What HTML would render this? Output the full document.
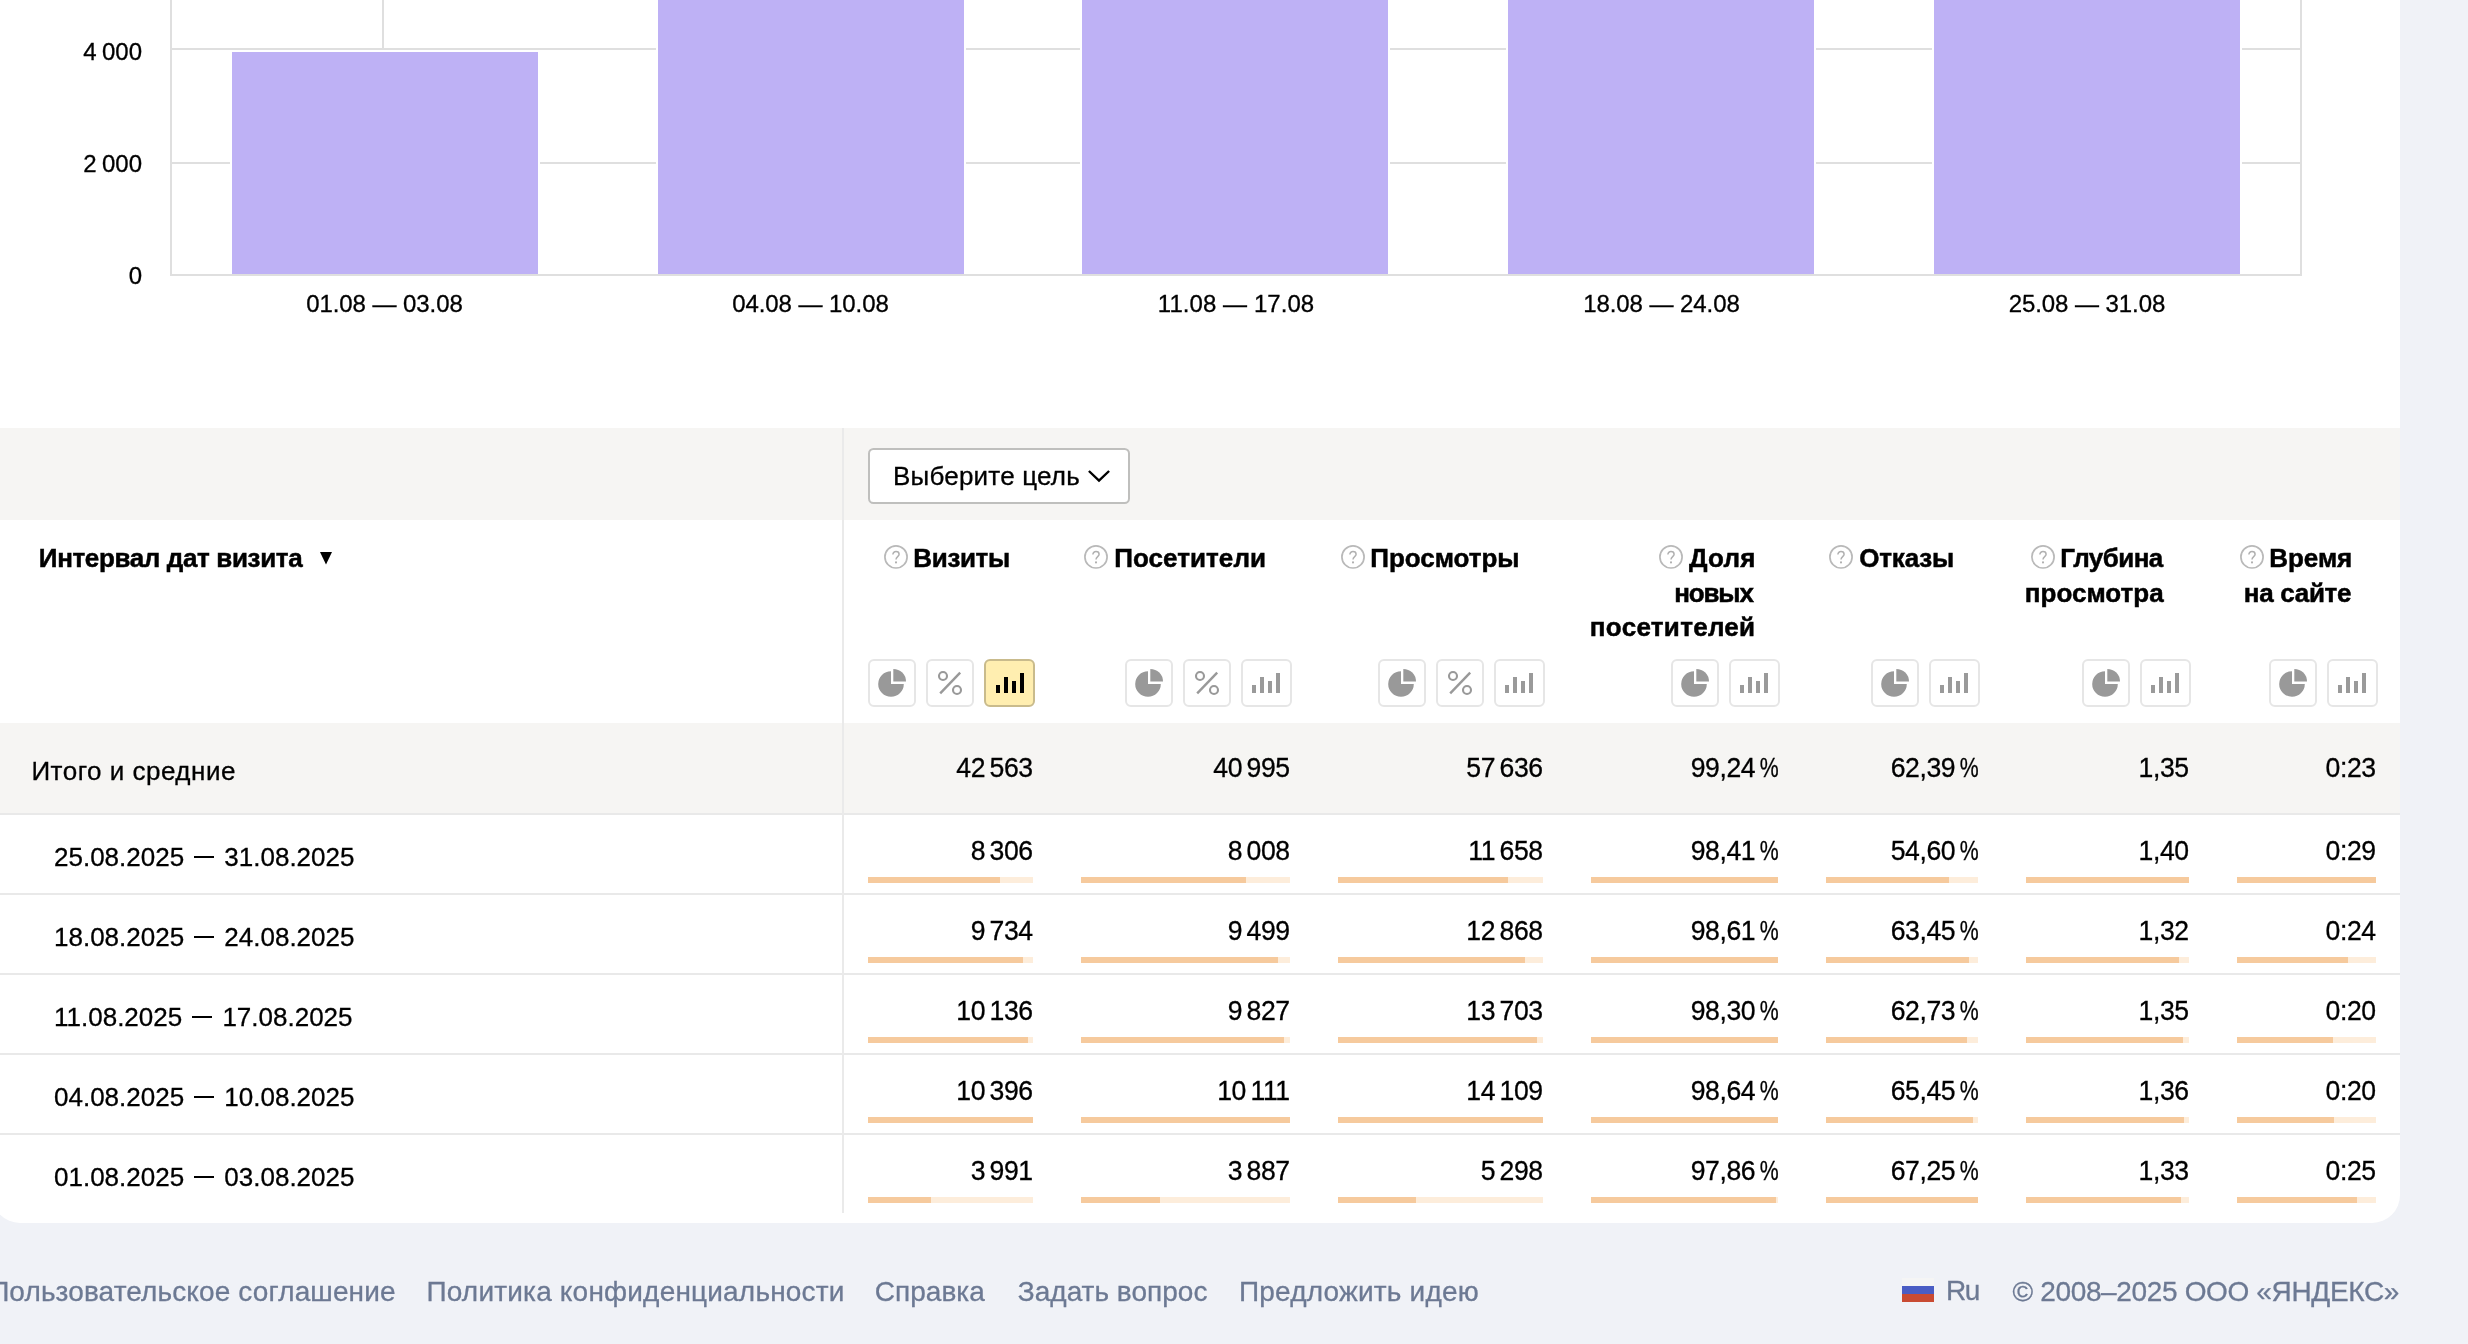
<!DOCTYPE html>
<html lang="ru"><head><meta charset="utf-8"><title>Метрика</title><style>
html,body{margin:0;padding:0;}
body{width:2468px;height:1344px;overflow:hidden;background:#f0f2f7;position:relative;font-family:"Liberation Sans", sans-serif;color:#000;-webkit-text-stroke:0.3px currentColor;}
#r{position:absolute;left:0;top:0;width:2468px;height:1344px;overflow:hidden;will-change:transform;-webkit-font-smoothing:antialiased;}
#r>div,#r>span,#r>svg{position:absolute;display:block;white-space:pre;box-sizing:content-box;}
i{font-style:normal;}
.num{font-size:26.6px;line-height:27px;text-align:right;letter-spacing:-0.4px;transform:scaleY(1.035);transform-origin:50% 22.5px;}
.ts{display:inline-block;width:4.5px;}
.ts2{display:inline-block;width:5.3px;}
.pc{display:inline-block;transform:scaleX(.8);transform-origin:100% 50%;margin-left:-0.2px;}
.dash{display:inline-block;width:20px;height:2px;background:#000;margin:0 10.2px 0 10px;vertical-align:7.5px;}
</style></head><body><div id="r">
<div style="left:-8px;top:-60px;width:2408px;height:1283px;background:#fff;border-radius:0 0 28px 28px;"></div>
<div style="left:382px;top:0px;width:2px;height:50px;background:#dfdfdf;"></div>
<div style="left:171px;top:48px;width:2130px;height:2px;background:#dfdfdf;"></div>
<div style="left:171px;top:162px;width:2130px;height:2px;background:#dfdfdf;"></div>
<div style="left:230px;top:50px;width:310px;height:224px;background:#fff;"></div>
<div style="left:232px;top:52px;width:306px;height:222px;background:#beb1f5;"></div>
<div style="left:656px;top:-12px;width:310px;height:286px;background:#fff;"></div>
<div style="left:658px;top:-10px;width:306px;height:284px;background:#beb1f5;"></div>
<div style="left:1080px;top:-12px;width:310px;height:286px;background:#fff;"></div>
<div style="left:1082px;top:-10px;width:306px;height:284px;background:#beb1f5;"></div>
<div style="left:1506px;top:-12px;width:310px;height:286px;background:#fff;"></div>
<div style="left:1508px;top:-10px;width:306px;height:284px;background:#beb1f5;"></div>
<div style="left:1932px;top:-12px;width:310px;height:286px;background:#fff;"></div>
<div style="left:1934px;top:-10px;width:306px;height:284px;background:#beb1f5;"></div>
<div style="left:170px;top:0px;width:2px;height:276px;background:#dfdfdf;"></div>
<div style="left:2300px;top:0px;width:2px;height:276px;background:#dfdfdf;"></div>
<div style="left:170px;top:274px;width:2132px;height:2px;background:#dfdfdf;"></div>
<span style="right:2326px;top:39.68px;font-size:24px;line-height:24px;">4<i class="ts2"></i>000</span>
<span style="right:2326px;top:151.68px;font-size:24px;line-height:24px;">2<i class="ts2"></i>000</span>
<span style="right:2326px;top:263.68px;font-size:24px;line-height:24px;">0</span>
<span style="left:306.21px;top:291.68px;font-size:24px;line-height:24px;color:#000;letter-spacing:-0.073px;">01.08 — 03.08</span>
<span style="left:732.21px;top:291.68px;font-size:24px;line-height:24px;color:#000;letter-spacing:-0.073px;">04.08 — 10.08</span>
<span style="left:1157.78px;top:291.68px;font-size:24px;line-height:24px;color:#000;letter-spacing:0.064px;">11.08 — 17.08</span>
<span style="left:1583.21px;top:291.68px;font-size:24px;line-height:24px;color:#000;letter-spacing:-0.073px;">18.08 — 24.08</span>
<span style="left:2008.71px;top:291.68px;font-size:24px;line-height:24px;color:#000;letter-spacing:-0.073px;">25.08 — 31.08</span>
<div style="left:0px;top:428px;width:2400px;height:92px;background:#f6f5f3;"></div>
<div style="left:0px;top:723px;width:2400px;height:90px;background:#f6f5f3;"></div>
<div style="left:0px;top:813px;width:2400px;height:2px;background:#e9e9e9;"></div>
<div style="left:0px;top:893px;width:2400px;height:2px;background:#e9e9e9;"></div>
<div style="left:0px;top:973px;width:2400px;height:2px;background:#e9e9e9;"></div>
<div style="left:0px;top:1053px;width:2400px;height:2px;background:#e9e9e9;"></div>
<div style="left:0px;top:1133px;width:2400px;height:2px;background:#e9e9e9;"></div>
<div style="left:842px;top:428px;width:2px;height:785px;background:#eaeaea;"></div>
<div style="left:868px;top:448px;width:258px;height:52px;background:#fff;border:2px solid #bfbfbd;border-radius:5.5px;"></div>
<span style="left:892.98px;top:462.99px;font-size:26px;line-height:26px;color:#000;letter-spacing:0.212px;">Выберите цель</span>
<svg style="left:1086px;top:468px" width="26" height="16" viewBox="0 0 26 16"><path d="M2.9 3.0 L13 12.7 L23.1 3.0" fill="none" stroke="#000" stroke-width="2.4" stroke-linecap="butt" stroke-linejoin="miter"/></svg>
<span style="left:38.82px;top:544.99px;font-size:26px;line-height:26px;color:#000;font-weight:700;-webkit-text-stroke-width:0.5px;letter-spacing:-0.361px;">Интервал дат визита</span>
<svg style="left:320px;top:552px" width="12" height="13" viewBox="0 0 12 13"><path d="M0 0 H12 L6 12.5 Z" fill="#000"/></svg>
<span style="left:913.36px;top:544.99px;font-size:26px;line-height:26px;color:#000;font-weight:700;-webkit-text-stroke-width:0.5px;letter-spacing:-0.370px;">Визиты</span>
<svg style="left:882.8px;top:544px" width="26" height="26" viewBox="0 0 26 26"><circle cx="13" cy="12.9" r="11.1" fill="#fff" stroke="#b9b9b9" stroke-width="1.7"/><path d="M9.9 10.6 C9.9 8.6 11.3 7.6 13 7.6 C14.8 7.6 16.1 8.7 16.1 10.3 C16.1 12.6 13 12.6 13 15.4" fill="none" stroke="#b0b0b0" stroke-width="1.5"/><circle cx="13" cy="18.4" r="1.05" fill="#b0b0b0"/></svg>
<div style="left:984px;top:659px;width:47px;height:44px;background:#ffeeb0;border:2px solid #c9bb8c;border-radius:6px;"></div>
<svg style="left:984px;top:659px" width="50" height="48" viewBox="0 0 50 48"><path d="M12 26h4v8h-4z M20 18h4v16h-4z M28 22h4v12h-4z M36 14h4v20h-4z" fill="#000"/></svg>
<div style="left:926px;top:659px;width:44px;height:44px;background:#fff;border:2px solid #e6e6e6;border-radius:6px;"></div>
<svg style="left:926px;top:659px" width="48" height="48" viewBox="0 0 48 48"><circle cx="17" cy="17" r="4" fill="none" stroke="#999" stroke-width="2.1"/><circle cx="31" cy="31" r="4" fill="none" stroke="#999" stroke-width="2.1"/><path d="M14.2 34.4 L34.2 13.6" stroke="#999" stroke-width="2.4" fill="none"/></svg>
<div style="left:868px;top:659px;width:44px;height:44px;background:#fff;border:2px solid #e6e6e6;border-radius:6px;"></div>
<svg style="left:868px;top:659px" width="48" height="48" viewBox="0 0 48 48"><path d="M23 12.2 A12.8 12.8 0 1 0 35.8 25 H23 Z" fill="#999"/><path d="M25.3 9.9 A12.7 12.7 0 0 1 38 22.6 H25.3 Z" fill="#999"/></svg>
<span style="left:1114.24px;top:544.99px;font-size:26px;line-height:26px;color:#000;font-weight:700;-webkit-text-stroke-width:0.5px;letter-spacing:0.054px;">Посетители</span>
<svg style="left:1082.8px;top:544px" width="26" height="26" viewBox="0 0 26 26"><circle cx="13" cy="12.9" r="11.1" fill="#fff" stroke="#b9b9b9" stroke-width="1.7"/><path d="M9.9 10.6 C9.9 8.6 11.3 7.6 13 7.6 C14.8 7.6 16.1 8.7 16.1 10.3 C16.1 12.6 13 12.6 13 15.4" fill="none" stroke="#b0b0b0" stroke-width="1.5"/><circle cx="13" cy="18.4" r="1.05" fill="#b0b0b0"/></svg>
<div style="left:1241px;top:659px;width:47px;height:44px;background:#fff;border:2px solid #e6e6e6;border-radius:6px;"></div>
<svg style="left:1240px;top:659px" width="50" height="48" viewBox="0 0 50 48"><path d="M12 26h4v8h-4z M20 18h4v16h-4z M28 22h4v12h-4z M36 14h4v20h-4z" fill="#9a9a9a"/></svg>
<div style="left:1183px;top:659px;width:44px;height:44px;background:#fff;border:2px solid #e6e6e6;border-radius:6px;"></div>
<svg style="left:1183px;top:659px" width="48" height="48" viewBox="0 0 48 48"><circle cx="17" cy="17" r="4" fill="none" stroke="#999" stroke-width="2.1"/><circle cx="31" cy="31" r="4" fill="none" stroke="#999" stroke-width="2.1"/><path d="M14.2 34.4 L34.2 13.6" stroke="#999" stroke-width="2.4" fill="none"/></svg>
<div style="left:1125px;top:659px;width:44px;height:44px;background:#fff;border:2px solid #e6e6e6;border-radius:6px;"></div>
<svg style="left:1125px;top:659px" width="48" height="48" viewBox="0 0 48 48"><path d="M23 12.2 A12.8 12.8 0 1 0 35.8 25 H23 Z" fill="#999"/><path d="M25.3 9.9 A12.7 12.7 0 0 1 38 22.6 H25.3 Z" fill="#999"/></svg>
<span style="left:1370.36px;top:544.99px;font-size:26px;line-height:26px;color:#000;font-weight:700;-webkit-text-stroke-width:0.5px;letter-spacing:-0.040px;">Просмотры</span>
<svg style="left:1339.8px;top:544px" width="26" height="26" viewBox="0 0 26 26"><circle cx="13" cy="12.9" r="11.1" fill="#fff" stroke="#b9b9b9" stroke-width="1.7"/><path d="M9.9 10.6 C9.9 8.6 11.3 7.6 13 7.6 C14.8 7.6 16.1 8.7 16.1 10.3 C16.1 12.6 13 12.6 13 15.4" fill="none" stroke="#b0b0b0" stroke-width="1.5"/><circle cx="13" cy="18.4" r="1.05" fill="#b0b0b0"/></svg>
<div style="left:1494px;top:659px;width:47px;height:44px;background:#fff;border:2px solid #e6e6e6;border-radius:6px;"></div>
<svg style="left:1493px;top:659px" width="50" height="48" viewBox="0 0 50 48"><path d="M12 26h4v8h-4z M20 18h4v16h-4z M28 22h4v12h-4z M36 14h4v20h-4z" fill="#9a9a9a"/></svg>
<div style="left:1436px;top:659px;width:44px;height:44px;background:#fff;border:2px solid #e6e6e6;border-radius:6px;"></div>
<svg style="left:1436px;top:659px" width="48" height="48" viewBox="0 0 48 48"><circle cx="17" cy="17" r="4" fill="none" stroke="#999" stroke-width="2.1"/><circle cx="31" cy="31" r="4" fill="none" stroke="#999" stroke-width="2.1"/><path d="M14.2 34.4 L34.2 13.6" stroke="#999" stroke-width="2.4" fill="none"/></svg>
<div style="left:1378px;top:659px;width:44px;height:44px;background:#fff;border:2px solid #e6e6e6;border-radius:6px;"></div>
<svg style="left:1378px;top:659px" width="48" height="48" viewBox="0 0 48 48"><path d="M23 12.2 A12.8 12.8 0 1 0 35.8 25 H23 Z" fill="#999"/><path d="M25.3 9.9 A12.7 12.7 0 0 1 38 22.6 H25.3 Z" fill="#999"/></svg>
<span style="left:1689.00px;top:544.99px;font-size:26px;line-height:26px;color:#000;font-weight:700;-webkit-text-stroke-width:0.5px;letter-spacing:0.217px;">Доля</span>
<span style="left:1674.24px;top:579.99px;font-size:26px;line-height:26px;color:#000;font-weight:700;-webkit-text-stroke-width:0.5px;letter-spacing:-1.147px;">новых</span>
<span style="left:1589.86px;top:613.99px;font-size:26px;line-height:26px;color:#000;font-weight:700;-webkit-text-stroke-width:0.5px;letter-spacing:0.290px;">посетителей</span>
<svg style="left:1657.9px;top:544px" width="26" height="26" viewBox="0 0 26 26"><circle cx="13" cy="12.9" r="11.1" fill="#fff" stroke="#b9b9b9" stroke-width="1.7"/><path d="M9.9 10.6 C9.9 8.6 11.3 7.6 13 7.6 C14.8 7.6 16.1 8.7 16.1 10.3 C16.1 12.6 13 12.6 13 15.4" fill="none" stroke="#b0b0b0" stroke-width="1.5"/><circle cx="13" cy="18.4" r="1.05" fill="#b0b0b0"/></svg>
<div style="left:1729px;top:659px;width:47px;height:44px;background:#fff;border:2px solid #e6e6e6;border-radius:6px;"></div>
<svg style="left:1728px;top:659px" width="50" height="48" viewBox="0 0 50 48"><path d="M12 26h4v8h-4z M20 18h4v16h-4z M28 22h4v12h-4z M36 14h4v20h-4z" fill="#9a9a9a"/></svg>
<div style="left:1671px;top:659px;width:44px;height:44px;background:#fff;border:2px solid #e6e6e6;border-radius:6px;"></div>
<svg style="left:1671px;top:659px" width="48" height="48" viewBox="0 0 48 48"><path d="M23 12.2 A12.8 12.8 0 1 0 35.8 25 H23 Z" fill="#999"/><path d="M25.3 9.9 A12.7 12.7 0 0 1 38 22.6 H25.3 Z" fill="#999"/></svg>
<span style="left:1859.16px;top:544.99px;font-size:26px;line-height:26px;color:#000;font-weight:700;-webkit-text-stroke-width:0.5px;letter-spacing:-0.159px;">Отказы</span>
<svg style="left:1828.0px;top:544px" width="26" height="26" viewBox="0 0 26 26"><circle cx="13" cy="12.9" r="11.1" fill="#fff" stroke="#b9b9b9" stroke-width="1.7"/><path d="M9.9 10.6 C9.9 8.6 11.3 7.6 13 7.6 C14.8 7.6 16.1 8.7 16.1 10.3 C16.1 12.6 13 12.6 13 15.4" fill="none" stroke="#b0b0b0" stroke-width="1.5"/><circle cx="13" cy="18.4" r="1.05" fill="#b0b0b0"/></svg>
<div style="left:1929px;top:659px;width:47px;height:44px;background:#fff;border:2px solid #e6e6e6;border-radius:6px;"></div>
<svg style="left:1928px;top:659px" width="50" height="48" viewBox="0 0 50 48"><path d="M12 26h4v8h-4z M20 18h4v16h-4z M28 22h4v12h-4z M36 14h4v20h-4z" fill="#9a9a9a"/></svg>
<div style="left:1871px;top:659px;width:44px;height:44px;background:#fff;border:2px solid #e6e6e6;border-radius:6px;"></div>
<svg style="left:1871px;top:659px" width="48" height="48" viewBox="0 0 48 48"><path d="M23 12.2 A12.8 12.8 0 1 0 35.8 25 H23 Z" fill="#999"/><path d="M25.3 9.9 A12.7 12.7 0 0 1 38 22.6 H25.3 Z" fill="#999"/></svg>
<span style="left:2060.32px;top:544.99px;font-size:26px;line-height:26px;color:#000;font-weight:700;-webkit-text-stroke-width:0.5px;letter-spacing:-0.544px;">Глубина</span>
<span style="left:2024.86px;top:579.99px;font-size:26px;line-height:26px;color:#000;font-weight:700;-webkit-text-stroke-width:0.5px;letter-spacing:0.007px;">просмотра</span>
<svg style="left:2029.7px;top:544px" width="26" height="26" viewBox="0 0 26 26"><circle cx="13" cy="12.9" r="11.1" fill="#fff" stroke="#b9b9b9" stroke-width="1.7"/><path d="M9.9 10.6 C9.9 8.6 11.3 7.6 13 7.6 C14.8 7.6 16.1 8.7 16.1 10.3 C16.1 12.6 13 12.6 13 15.4" fill="none" stroke="#b0b0b0" stroke-width="1.5"/><circle cx="13" cy="18.4" r="1.05" fill="#b0b0b0"/></svg>
<div style="left:2140px;top:659px;width:47px;height:44px;background:#fff;border:2px solid #e6e6e6;border-radius:6px;"></div>
<svg style="left:2139px;top:659px" width="50" height="48" viewBox="0 0 50 48"><path d="M12 26h4v8h-4z M20 18h4v16h-4z M28 22h4v12h-4z M36 14h4v20h-4z" fill="#9a9a9a"/></svg>
<div style="left:2082px;top:659px;width:44px;height:44px;background:#fff;border:2px solid #e6e6e6;border-radius:6px;"></div>
<svg style="left:2082px;top:659px" width="48" height="48" viewBox="0 0 48 48"><path d="M23 12.2 A12.8 12.8 0 1 0 35.8 25 H23 Z" fill="#999"/><path d="M25.3 9.9 A12.7 12.7 0 0 1 38 22.6 H25.3 Z" fill="#999"/></svg>
<span style="left:2269.24px;top:544.99px;font-size:26px;line-height:26px;color:#000;font-weight:700;-webkit-text-stroke-width:0.5px;letter-spacing:-0.037px;">Время</span>
<span style="left:2243.86px;top:579.99px;font-size:26px;line-height:26px;color:#000;font-weight:700;-webkit-text-stroke-width:0.5px;letter-spacing:-0.308px;">на сайте</span>
<svg style="left:2238.9px;top:544px" width="26" height="26" viewBox="0 0 26 26"><circle cx="13" cy="12.9" r="11.1" fill="#fff" stroke="#b9b9b9" stroke-width="1.7"/><path d="M9.9 10.6 C9.9 8.6 11.3 7.6 13 7.6 C14.8 7.6 16.1 8.7 16.1 10.3 C16.1 12.6 13 12.6 13 15.4" fill="none" stroke="#b0b0b0" stroke-width="1.5"/><circle cx="13" cy="18.4" r="1.05" fill="#b0b0b0"/></svg>
<div style="left:2327px;top:659px;width:47px;height:44px;background:#fff;border:2px solid #e6e6e6;border-radius:6px;"></div>
<svg style="left:2326px;top:659px" width="50" height="48" viewBox="0 0 50 48"><path d="M12 26h4v8h-4z M20 18h4v16h-4z M28 22h4v12h-4z M36 14h4v20h-4z" fill="#9a9a9a"/></svg>
<div style="left:2269px;top:659px;width:44px;height:44px;background:#fff;border:2px solid #e6e6e6;border-radius:6px;"></div>
<svg style="left:2269px;top:659px" width="48" height="48" viewBox="0 0 48 48"><path d="M23 12.2 A12.8 12.8 0 1 0 35.8 25 H23 Z" fill="#999"/><path d="M25.3 9.9 A12.7 12.7 0 0 1 38 22.6 H25.3 Z" fill="#999"/></svg>
<span style="left:31.40px;top:757.99px;font-size:26px;line-height:26px;color:#000;letter-spacing:0.501px;">Итого и средние</span>
<span class="num" style="right:1435.3px;top:754.64px;">42<i class="ts"></i>563</span>
<span class="num" style="right:1178.3px;top:754.64px;">40<i class="ts"></i>995</span>
<span class="num" style="right:925.3px;top:754.64px;">57<i class="ts"></i>636</span>
<span class="num" style="right:689.7px;top:754.64px;">99,24<i class="pc">%</i></span>
<span class="num" style="right:489.7px;top:754.64px;">62,39<i class="pc">%</i></span>
<span class="num" style="right:279.3px;top:754.64px;">1,35</span>
<span class="num" style="right:92.3px;top:754.64px;">0:23</span>
<span style="left:54px;top:843.99px;font-size:26px;line-height:26px;">25.08.2025<i class="dash"></i>31.08.2025</span>
<span class="num" style="right:1435.3px;top:837.64px;">8<i class="ts"></i>306</span>
<div style="left:868px;top:877px;width:165px;height:6px;background:#fdeddb;"></div>
<div style="left:868px;top:877px;width:132.0px;height:6px;background:#f6ca9d;"></div>
<span class="num" style="right:1178.3px;top:837.64px;">8<i class="ts"></i>008</span>
<div style="left:1081px;top:877px;width:209px;height:6px;background:#fdeddb;"></div>
<div style="left:1081px;top:877px;width:165.1px;height:6px;background:#f6ca9d;"></div>
<span class="num" style="right:925.3px;top:837.64px;">11<i class="ts"></i>658</span>
<div style="left:1338px;top:877px;width:205px;height:6px;background:#fdeddb;"></div>
<div style="left:1338px;top:877px;width:170.2px;height:6px;background:#f6ca9d;"></div>
<span class="num" style="right:689.7px;top:837.64px;">98,41<i class="pc">%</i></span>
<div style="left:1591px;top:877px;width:187px;height:6px;background:#fdeddb;"></div>
<div style="left:1591px;top:877px;width:187.0px;height:6px;background:#f6ca9d;"></div>
<span class="num" style="right:489.7px;top:837.64px;">54,60<i class="pc">%</i></span>
<div style="left:1826px;top:877px;width:152px;height:6px;background:#fdeddb;"></div>
<div style="left:1826px;top:877px;width:123.1px;height:6px;background:#f6ca9d;"></div>
<span class="num" style="right:279.3px;top:837.64px;">1,40</span>
<div style="left:2026px;top:877px;width:163px;height:6px;background:#fdeddb;"></div>
<div style="left:2026px;top:877px;width:163.0px;height:6px;background:#f6ca9d;"></div>
<span class="num" style="right:92.3px;top:837.64px;">0:29</span>
<div style="left:2237px;top:877px;width:139px;height:6px;background:#fdeddb;"></div>
<div style="left:2237px;top:877px;width:139.0px;height:6px;background:#f6ca9d;"></div>
<span style="left:54px;top:923.99px;font-size:26px;line-height:26px;">18.08.2025<i class="dash"></i>24.08.2025</span>
<span class="num" style="right:1435.3px;top:917.64px;">9<i class="ts"></i>734</span>
<div style="left:868px;top:957px;width:165px;height:6px;background:#fdeddb;"></div>
<div style="left:868px;top:957px;width:155.1px;height:6px;background:#f6ca9d;"></div>
<span class="num" style="right:1178.3px;top:917.64px;">9<i class="ts"></i>499</span>
<div style="left:1081px;top:957px;width:209px;height:6px;background:#fdeddb;"></div>
<div style="left:1081px;top:957px;width:196.5px;height:6px;background:#f6ca9d;"></div>
<span class="num" style="right:925.3px;top:917.64px;">12<i class="ts"></i>868</span>
<div style="left:1338px;top:957px;width:205px;height:6px;background:#fdeddb;"></div>
<div style="left:1338px;top:957px;width:186.6px;height:6px;background:#f6ca9d;"></div>
<span class="num" style="right:689.7px;top:917.64px;">98,61<i class="pc">%</i></span>
<div style="left:1591px;top:957px;width:187px;height:6px;background:#fdeddb;"></div>
<div style="left:1591px;top:957px;width:187.0px;height:6px;background:#f6ca9d;"></div>
<span class="num" style="right:489.7px;top:917.64px;">63,45<i class="pc">%</i></span>
<div style="left:1826px;top:957px;width:152px;height:6px;background:#fdeddb;"></div>
<div style="left:1826px;top:957px;width:142.9px;height:6px;background:#f6ca9d;"></div>
<span class="num" style="right:279.3px;top:917.64px;">1,32</span>
<div style="left:2026px;top:957px;width:163px;height:6px;background:#fdeddb;"></div>
<div style="left:2026px;top:957px;width:153.2px;height:6px;background:#f6ca9d;"></div>
<span class="num" style="right:92.3px;top:917.64px;">0:24</span>
<div style="left:2237px;top:957px;width:139px;height:6px;background:#fdeddb;"></div>
<div style="left:2237px;top:957px;width:111.2px;height:6px;background:#f6ca9d;"></div>
<span style="left:54px;top:1003.99px;font-size:26px;line-height:26px;">11.08.2025<i class="dash"></i>17.08.2025</span>
<span class="num" style="right:1435.3px;top:997.64px;">10<i class="ts"></i>136</span>
<div style="left:868px;top:1037px;width:165px;height:6px;background:#fdeddb;"></div>
<div style="left:868px;top:1037px;width:160.1px;height:6px;background:#f6ca9d;"></div>
<span class="num" style="right:1178.3px;top:997.64px;">9<i class="ts"></i>827</span>
<div style="left:1081px;top:1037px;width:209px;height:6px;background:#fdeddb;"></div>
<div style="left:1081px;top:1037px;width:202.7px;height:6px;background:#f6ca9d;"></div>
<span class="num" style="right:925.3px;top:997.64px;">13<i class="ts"></i>703</span>
<div style="left:1338px;top:1037px;width:205px;height:6px;background:#fdeddb;"></div>
<div style="left:1338px;top:1037px;width:198.8px;height:6px;background:#f6ca9d;"></div>
<span class="num" style="right:689.7px;top:997.64px;">98,30<i class="pc">%</i></span>
<div style="left:1591px;top:1037px;width:187px;height:6px;background:#fdeddb;"></div>
<div style="left:1591px;top:1037px;width:187.0px;height:6px;background:#f6ca9d;"></div>
<span class="num" style="right:489.7px;top:997.64px;">62,73<i class="pc">%</i></span>
<div style="left:1826px;top:1037px;width:152px;height:6px;background:#fdeddb;"></div>
<div style="left:1826px;top:1037px;width:141.4px;height:6px;background:#f6ca9d;"></div>
<span class="num" style="right:279.3px;top:997.64px;">1,35</span>
<div style="left:2026px;top:1037px;width:163px;height:6px;background:#fdeddb;"></div>
<div style="left:2026px;top:1037px;width:156.5px;height:6px;background:#f6ca9d;"></div>
<span class="num" style="right:92.3px;top:997.64px;">0:20</span>
<div style="left:2237px;top:1037px;width:139px;height:6px;background:#fdeddb;"></div>
<div style="left:2237px;top:1037px;width:95.9px;height:6px;background:#f6ca9d;"></div>
<span style="left:54px;top:1083.99px;font-size:26px;line-height:26px;">04.08.2025<i class="dash"></i>10.08.2025</span>
<span class="num" style="right:1435.3px;top:1077.64px;">10<i class="ts"></i>396</span>
<div style="left:868px;top:1117px;width:165px;height:6px;background:#fdeddb;"></div>
<div style="left:868px;top:1117px;width:165.0px;height:6px;background:#f6ca9d;"></div>
<span class="num" style="right:1178.3px;top:1077.64px;">10<i class="ts"></i>111</span>
<div style="left:1081px;top:1117px;width:209px;height:6px;background:#fdeddb;"></div>
<div style="left:1081px;top:1117px;width:209.0px;height:6px;background:#f6ca9d;"></div>
<span class="num" style="right:925.3px;top:1077.64px;">14<i class="ts"></i>109</span>
<div style="left:1338px;top:1117px;width:205px;height:6px;background:#fdeddb;"></div>
<div style="left:1338px;top:1117px;width:205.0px;height:6px;background:#f6ca9d;"></div>
<span class="num" style="right:689.7px;top:1077.64px;">98,64<i class="pc">%</i></span>
<div style="left:1591px;top:1117px;width:187px;height:6px;background:#fdeddb;"></div>
<div style="left:1591px;top:1117px;width:187.0px;height:6px;background:#f6ca9d;"></div>
<span class="num" style="right:489.7px;top:1077.64px;">65,45<i class="pc">%</i></span>
<div style="left:1826px;top:1117px;width:152px;height:6px;background:#fdeddb;"></div>
<div style="left:1826px;top:1117px;width:147.4px;height:6px;background:#f6ca9d;"></div>
<span class="num" style="right:279.3px;top:1077.64px;">1,36</span>
<div style="left:2026px;top:1117px;width:163px;height:6px;background:#fdeddb;"></div>
<div style="left:2026px;top:1117px;width:158.1px;height:6px;background:#f6ca9d;"></div>
<span class="num" style="right:92.3px;top:1077.64px;">0:20</span>
<div style="left:2237px;top:1117px;width:139px;height:6px;background:#fdeddb;"></div>
<div style="left:2237px;top:1117px;width:97.3px;height:6px;background:#f6ca9d;"></div>
<span style="left:54px;top:1163.99px;font-size:26px;line-height:26px;">01.08.2025<i class="dash"></i>03.08.2025</span>
<span class="num" style="right:1435.3px;top:1157.64px;">3<i class="ts"></i>991</span>
<div style="left:868px;top:1197px;width:165px;height:6px;background:#fdeddb;"></div>
<div style="left:868px;top:1197px;width:62.7px;height:6px;background:#f6ca9d;"></div>
<span class="num" style="right:1178.3px;top:1157.64px;">3<i class="ts"></i>887</span>
<div style="left:1081px;top:1197px;width:209px;height:6px;background:#fdeddb;"></div>
<div style="left:1081px;top:1197px;width:79.4px;height:6px;background:#f6ca9d;"></div>
<span class="num" style="right:925.3px;top:1157.64px;">5<i class="ts"></i>298</span>
<div style="left:1338px;top:1197px;width:205px;height:6px;background:#fdeddb;"></div>
<div style="left:1338px;top:1197px;width:77.9px;height:6px;background:#f6ca9d;"></div>
<span class="num" style="right:689.7px;top:1157.64px;">97,86<i class="pc">%</i></span>
<div style="left:1591px;top:1197px;width:187px;height:6px;background:#fdeddb;"></div>
<div style="left:1591px;top:1197px;width:185.1px;height:6px;background:#f6ca9d;"></div>
<span class="num" style="right:489.7px;top:1157.64px;">67,25<i class="pc">%</i></span>
<div style="left:1826px;top:1197px;width:152px;height:6px;background:#fdeddb;"></div>
<div style="left:1826px;top:1197px;width:152.0px;height:6px;background:#f6ca9d;"></div>
<span class="num" style="right:279.3px;top:1157.64px;">1,33</span>
<div style="left:2026px;top:1197px;width:163px;height:6px;background:#fdeddb;"></div>
<div style="left:2026px;top:1197px;width:154.8px;height:6px;background:#f6ca9d;"></div>
<span class="num" style="right:92.3px;top:1157.64px;">0:25</span>
<div style="left:2237px;top:1197px;width:139px;height:6px;background:#fdeddb;"></div>
<div style="left:2237px;top:1197px;width:119.5px;height:6px;background:#f6ca9d;"></div>
<span style="left:-10.88px;top:1278.00px;font-size:28px;line-height:28px;color:#6c7993;letter-spacing:0.119px;">Пользовательское соглашение</span>
<span style="left:426.40px;top:1278.00px;font-size:28px;line-height:28px;color:#6c7993;letter-spacing:0.192px;">Политика конфиденциальности</span>
<span style="left:874.86px;top:1278.00px;font-size:28px;line-height:28px;color:#6c7993;letter-spacing:0.007px;">Справка</span>
<span style="left:1017.74px;top:1278.00px;font-size:28px;line-height:28px;color:#6c7993;letter-spacing:0.024px;">Задать вопрос</span>
<span style="left:1238.90px;top:1278.00px;font-size:28px;line-height:28px;color:#6c7993;letter-spacing:0.206px;">Предложить идею</span>
<div style="left:1902px;top:1278px;width:32px;height:8px;background:#f5f5f5;"></div>
<div style="left:1902px;top:1286px;width:32px;height:8px;background:#4a5dc4;"></div>
<div style="left:1902px;top:1294px;width:32px;height:8px;background:#c94b33;"></div>
<span style="left:1945.90px;top:1277.30px;font-size:28px;line-height:28px;color:#6c7993;letter-spacing:-1.348px;">Ru</span>
<span style="left:2012.54px;top:1278.00px;font-size:28px;line-height:28px;color:#6c7993;letter-spacing:-0.352px;">© 2008–2025 ООО «ЯНДЕКС»</span>
</div></body></html>
